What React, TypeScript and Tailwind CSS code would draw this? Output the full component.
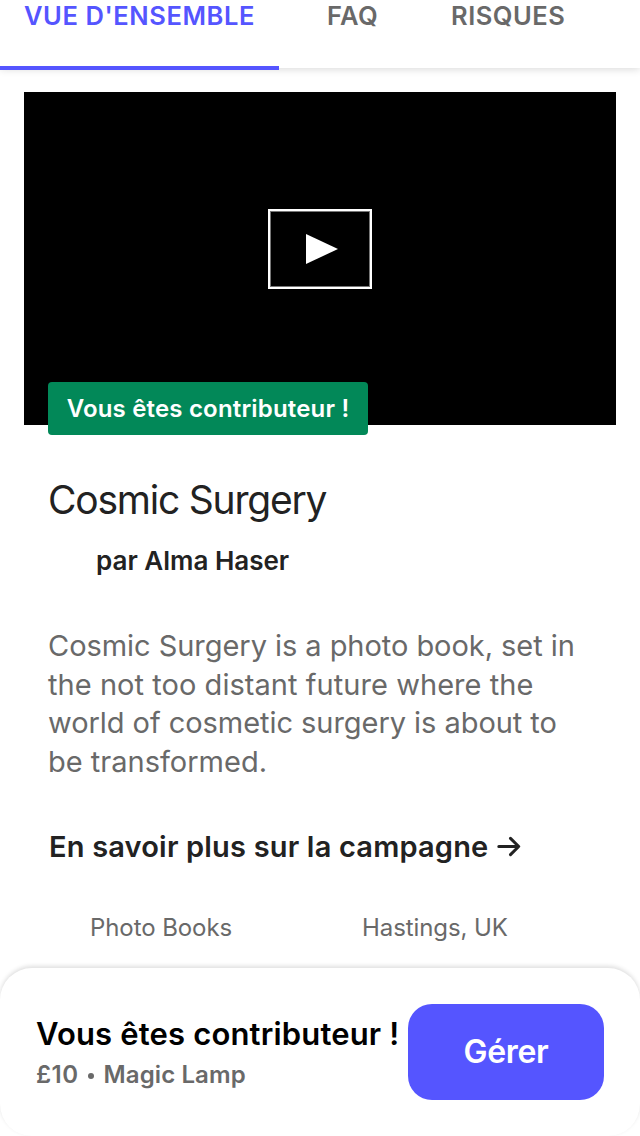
export default function App() {
  return (
    <div className="flex h-[1136px] w-[640px] flex-col overflow-hidden bg-white font-['Inter',sans-serif] text-[#222]">
      <nav className="flex h-[68px] shrink-0 text-[25.5px] font-semibold leading-[32px] text-[#696969] shadow-[0_1px_8px_rgba(0,0,0,0.16)]">
        <div className="z-10 h-[70px] w-[279px] shrink-0 border-b-4 border-[#5555ff] pl-[24px] text-[#5555ff]"><span className="whitespace-nowrap tracking-[0.57px]">VUE D'ENSEMBLE</span></div>
        <span className="ml-[48px] w-[124px] tracking-[0.4px]">FAQ</span>
        <span className="tracking-[0.5px]">RISQUES</span>
      </nav>
      <main className="flex min-h-0 flex-1 flex-col px-6 pt-6">
        <div className="flex h-[333px] shrink-0 items-center justify-center bg-black">
          <div className="mb-[20px] flex h-[80px] w-[104px] items-center justify-center border-2 border-white pl-1 shadow-[inset_0_0_0_1px_#777]">
            <svg width="32" height="30" viewBox="0 0 32 30"><path d="M0 0L32 15L0 30Z" fill="white" /></svg>
          </div>
        </div>
        <div className="z-10 -mt-[43px] ml-6 flex h-[53px] w-[320px] shrink-0 items-center justify-center rounded bg-[#028858] text-[24px] font-semibold text-white"><span className="whitespace-nowrap tracking-[0.18px]">Vous êtes contributeur !</span></div>
        <div className="flex flex-col px-6">
          <h1 className="mt-[41px] text-[39px] leading-[48px] tracking-[-1.22px]">Cosmic Surgery</h1>
          <p className="mt-[21px] pl-12 text-[26px] font-semibold leading-[32px]">par Alma Haser</p>
          <p className="mt-[50px] whitespace-nowrap text-[29px] leading-[38.7px] text-[#696969]"><span className="tracking-[-0.05px]">Cosmic Surgery is a photo book, set in</span><br /><span className="tracking-[0.05px]">the not too distant future where the</span><br /><span className="tracking-[-0.05px]">world of cosmetic surgery is about to</span><br /><span>be transformed.</span></p>
          <p className="mt-[45px] flex items-center whitespace-nowrap pl-px text-[29px] font-semibold leading-[40px]"><span className="tracking-[0.18px]">En savoir plus sur la campagne</span>
            <svg className="ml-[9px]" width="24" height="22" viewBox="0 0 24 22" fill="none" stroke="currentColor" strokeWidth="3" strokeLinecap="round" strokeLinejoin="round"><path d="M1.8 10.5H21.5M13.5 2.4L21.7 10.5L13.5 18.6" /></svg>
          </p>
          <div className="mt-[45px] flex pl-[42px] text-[24px] leading-[32px] text-[#696969]"><span className="w-[272px] tracking-[-0.08px]">Photo Books</span><span className="tracking-[-0.08px]">Hastings, UK</span></div>
        </div>
      </main>
      <footer className="z-10 flex h-[168px] shrink-0 rounded-[32px] bg-white px-9 pt-9 shadow-[0_-2px_4px_rgba(0,0,0,0.13)]">
        <div className="w-[372px] whitespace-nowrap"><p className="mt-[10px] text-[31px] font-semibold leading-[40px] text-black"><span className="tracking-[0.16px]">Vous êtes contributeur !</span></p><p className="mt-[5px] flex items-center text-[24px] font-semibold leading-[32px] text-[#696969]"><span className="tracking-[0.5px]">£10</span><span className="ml-[9px] mr-[10px] mt-[2px] size-[6px] rounded-full bg-[#696969]" /><span className="tracking-[0.1px]">Magic Lamp</span></p></div>
        <button className="h-[96px] w-[196px] shrink-0 rounded-[24px] bg-[#5555ff] text-[32px] font-semibold text-white"><span className="tracking-[-0.35px]">Gérer</span></button>
      </footer>
    </div>
  );
}
